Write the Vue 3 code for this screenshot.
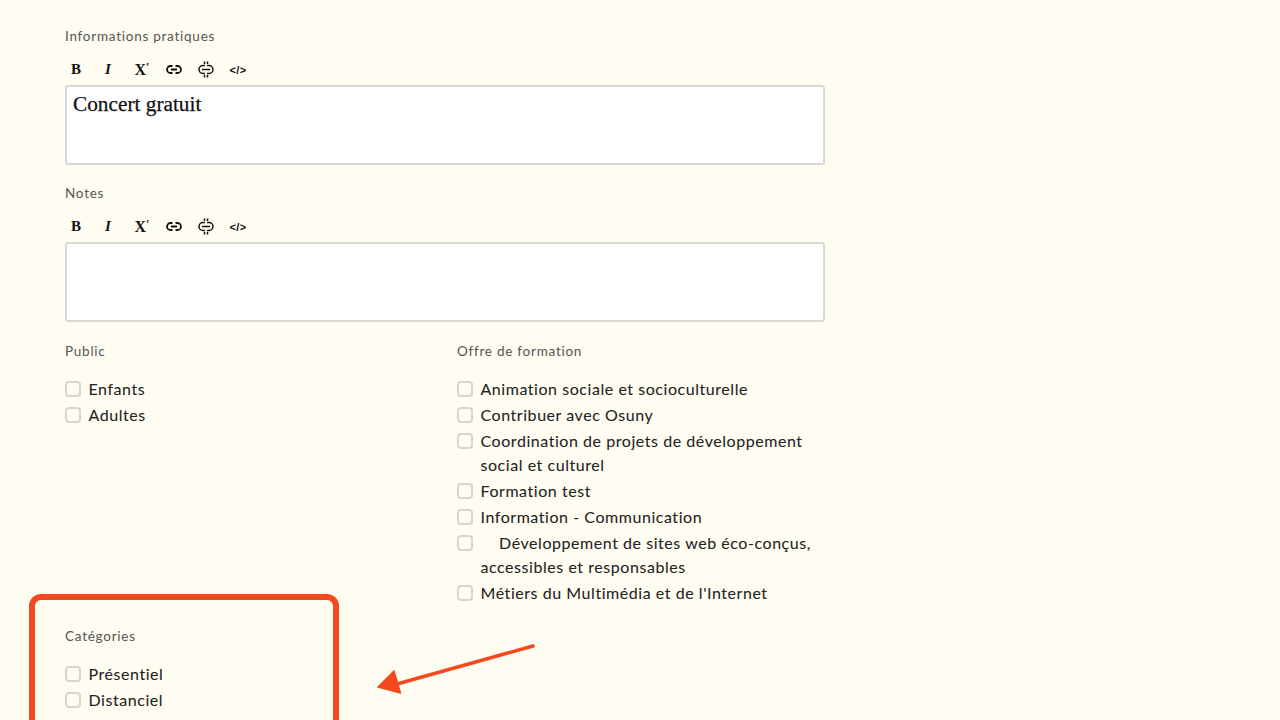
<script setup>
const publics = [{ id: 'p1', lines: 'Enfants' }, { id: 'p2', lines: 'Adultes' }]

const offers = [
  { id: 'o1', lines: 'Animation sociale et socioculturelle' },
  { id: 'o2', lines: 'Contribuer avec Osuny' },
  { id: 'o3', lines: 'Coordination de projets de développement social et culturel' },
  { id: 'o4', lines: 'Formation test' },
  { id: 'o5', lines: 'Information - Communication' },
  { id: 'o6', lines: '\u00a0\u00a0\u00a0\u00a0Développement de sites web éco-conçus, accessibles et responsables' },
  { id: 'o7', lines: "Métiers du Multimédia et de l'Internet" }
]

const categories = [{ id: 'c1', lines: 'Présentiel' }, { id: 'c2', lines: 'Distanciel' }]

const editors = [
  { label: 'Informations pratiques', value: 'Concert gratuit' },
  { label: 'Notes', value: '' }
]
</script>

<template>
  <div class="page">
    <div class="form">
      <div v-for="editor in editors" :key="editor.label" class="field">
        <div class="label">{{ editor.label }}</div>
        <div class="toolbar">
          <span class="tool bold">B</span>
          <span class="tool italic">I</span>
          <span class="tool sup">X<i>'</i></span>
          <span class="tool">
            <svg width="16" height="9" viewBox="0 0 16 9" fill="none" stroke="#111" stroke-width="1.8">
              <path d="M6.5 1H4.500a3.500 3.500 0 0 0 0 7h2M9.500 1h2a3.500 3.500 0 0 1 0 7h-2M5 4.500h6" />
            </svg>
          </span>
          <span class="tool">
            <svg width="16" height="17" viewBox="0 0 16 17" fill="none" stroke="#111" stroke-width="1.500">
              <path d="M7 4.500H5a4 4 0 0 0 0 8h2M9 4.500h2a4 4 0 0 1 0 8H9M4 8.500h8M6.500 .500v2.500M9.500 .500v2.500M6.500 14v2.500M9.500 14v2.500" />
            </svg>
          </span>
          <span class="tool code">&lt;/&gt;</span>
        </div>
        <div class="editor">{{ editor.value }}</div>
      </div>

      <div class="columns">
        <div>
          <div class="label list-label">Public</div>
          <div class="list">
            <div v-for="item in publics" :key="item.id" class="check">
              <span class="box"></span>
              <span>{{ item.lines }}</span>
            </div>
          </div>
        </div>
        <div>
          <div class="label list-label">Offre de formation</div>
          <div class="list">
            <div v-for="item in offers" :key="item.id" class="check">
              <span class="box"></span>
              <span>{{ item.lines }}</span>
            </div>
          </div>
        </div>
      </div>

      <div class="categories">
        <div class="label list-label">Catégories</div>
        <div class="list">
          <div v-for="item in categories" :key="item.id" class="check">
            <span class="box"></span>
            <span>{{ item.lines }}</span>
          </div>
        </div>
      </div>
    </div>

    <div class="highlight"></div>
    <svg class="arrow" width="170" height="60" viewBox="0 0 170 60">
      <path d="M158 6 L22 44" stroke="#f4491f" stroke-width="3.500" stroke-linecap="round" />
      <path d="M3 47 L19 31 L25.500 53 Z" fill="#f4491f" stroke="#f4491f" stroke-width="1.500" stroke-linejoin="round" />
    </svg>
  </div>
</template>

<style scoped>
.page {
  position: relative;
  height: 720px;
  overflow: hidden;
  background: #fffcf2;
  color: #1c1c1c;
  font-family: "Lato", "Noto Sans", sans-serif;
}
.form {
  width: 760px;
  margin-left: 65px;
  padding-top: 28px;
}
.field {
  margin-bottom: 20px;
}
.label {
  font-size: 13.5px;
  line-height: 16px;
  letter-spacing: 0.75px;
  color: #555;
}
.list-label {
  margin-bottom: 18px;
}
.toolbar {
  display: flex;
  height: 30px;
  margin-top: 10.5px;
  margin-left: -5px;
  align-items: center;
}
.tool {
  display: flex;
  width: 32px;
  height: 30px;
  align-items: center;
  justify-content: center;
  color: #111;
  font-family: "Liberation Serif", serif;
  font-size: 15px;
  font-weight: 700;
}
.italic {
  font-style: italic;
}
.sup {
  margin-left: 2px;
  font-size: 16px;
}
.sup i {
  font-size: 12px;
  font-style: normal;
  margin-top: -5px;
}
.code {
  font-family: "Liberation Sans", sans-serif;
  font-size: 11px;
  font-weight: 700;
  letter-spacing: 0.4px;
}
.editor {
  box-sizing: border-box;
  height: 80.5px;
  padding: 4px 6px;
  background: #fff;
  border: 2px solid #d8d8d5;
  border-radius: 3px;
  font-family: "Liberation Serif", serif;
  font-size: 21.3px;
  line-height: 26px;
  color: #111;
  -webkit-text-stroke: 0.25px #111;
}
.columns {
  display: grid;
  grid-template-columns: 368px 368px;
  gap: 24px;
  margin-top: 21px;
}
.categories {
  margin-top: 23px;
}
.list {
  display: flex;
  flex-direction: column;
  gap: 2px;
}
.check {
  position: relative;
  padding-left: 23.5px;
  font-size: 16px;
  line-height: 24px;
  letter-spacing: 0.55px;
  color: #222;
  -webkit-text-stroke: 0.06px #222;
}
.box {
  position: absolute;
  left: 0;
  top: 4px;
  box-sizing: border-box;
  width: 16px;
  height: 16px;
  background: #fffcf2;
  border: 2px solid #d6d6d0;
  border-radius: 4px;
}
.highlight {
  position: absolute;
  left: 29px;
  top: 594px;
  box-sizing: border-box;
  width: 310px;
  height: 200px;
  border: 6px solid #f4491f;
  border-radius: 12px;
}
.arrow {
  position: absolute;
  left: 375px;
  top: 640px;
}
</style>
